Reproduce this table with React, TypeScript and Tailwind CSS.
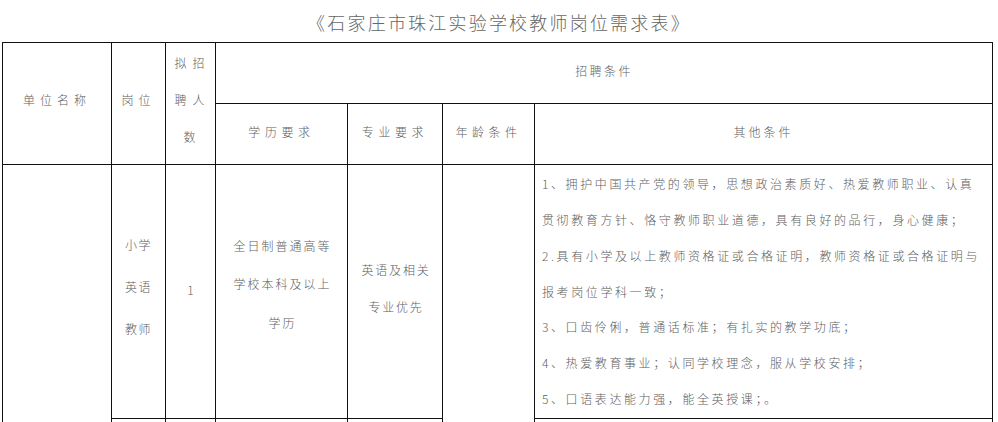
const cell = "border-[1.5px] border-[#111] p-0 text-center align-middle";
const font = { fontFamily: '"Noto Sans CJK SC", "Noto Sans", sans-serif' };

const others = [
  "1、拥护中国共产党的领导，思想政治素质好、热爱教师职业、认真",
  "贯彻教育方针、恪守教师职业道德，具有良好的品行，身心健康；",
  "2.具有小学及以上教师资格证或合格证明，教师资格证或合格证明与",
  "报考岗位学科一致；",
  "3、口齿伶俐，普通话标准；有扎实的教学功底；",
  "4、热爱教育事业；认同学校理念，服从学校安排；",
  "5、口语表达能力强，能全英授课；。",
];

export default function App() {
  return (
    <div className="w-[998px] h-[422px] overflow-hidden bg-white text-[#606060] font-light" style={font}>
      <h1 className="h-[42px] pt-[10px] text-center text-[18px] leading-[24px] tracking-[2.2px] font-light text-[#666]">
        《石家庄市珠江实验学校教师岗位需求表》
      </h1>
      <table className="ml-[2px] w-[991px] table-fixed border-collapse text-[12px]">
        <colgroup>
          <col className="w-[109px]" />
          <col className="w-[54px]" />
          <col className="w-[50px]" />
          <col className="w-[132px]" />
          <col className="w-[95px]" />
          <col className="w-[92px]" />
          <col />
        </colgroup>
        <tbody>
          <tr className="h-[61px]">
            <td rowSpan={2} className={cell}>
              <span className="tracking-[5px] pb-2 inline-block">单位名称</span>
            </td>
            <td rowSpan={2} className={cell}>
              <span className="tracking-[5px] pb-2 inline-block">岗位</span>
            </td>
            <td rowSpan={2} className={cell}>
              <div className="leading-[37px] tracking-[6px] pl-[4px] pb-2">
                <div>拟招</div>
                <div>聘人</div>
                <div>数</div>
              </div>
            </td>
            <td colSpan={4} className={cell}>
              <span className="tracking-[2.4px] pb-1 inline-block">招聘条件</span>
            </td>
          </tr>
          <tr className="h-[61px]">
            <td className={cell}>
              <span className="tracking-[4.6px] pb-1 inline-block">学历要求</span>
            </td>
            <td className={cell}>
              <span className="tracking-[4.6px] pb-1 inline-block">专业要求</span>
            </td>
            <td className={cell}>
              <span className="tracking-[4.4px] pb-1 inline-block">年龄条件</span>
            </td>
            <td className={cell}>
              <span className="tracking-[3px] pb-1 inline-block">其他条件</span>
            </td>
          </tr>
          <tr className="h-[254px]">
            <td rowSpan={2} className={cell}></td>
            <td className={cell}>
              <div className="leading-[42px] tracking-[1.5px] pb-[10px]">
                <div>小学</div>
                <div>英语</div>
                <div>教师</div>
              </div>
            </td>
            <td className={cell}>
              <span className="inline-block pb-1">1</span>
            </td>
            <td className={cell}>
              <div className="leading-[38.5px] tracking-[2px] pl-[2px] pb-[14px]">
                <div>全日制普通高等</div>
                <div>学校本科及以上</div>
                <div>学历</div>
              </div>
            </td>
            <td className={cell}>
              <div className="leading-[37px] tracking-[1.8px] pl-[2px] pb-[8px]">
                <div>英语及相关</div>
                <div>专业优先</div>
              </div>
            </td>
            <td rowSpan={2} className={cell}></td>
            <td className={`${cell} text-left`}>
              <div className="pl-[7px] leading-[35.8px] tracking-[2.6px] whitespace-nowrap">
                {others.map((line) => (
                  <div key={line}>{line}</div>
                ))}
              </div>
            </td>
          </tr>
          <tr className="h-[40px]">
            <td className={cell}></td>
            <td className={cell}></td>
            <td className={cell}></td>
            <td className={cell}></td>
            <td className={cell}></td>
          </tr>
        </tbody>
      </table>
    </div>
  );
}
